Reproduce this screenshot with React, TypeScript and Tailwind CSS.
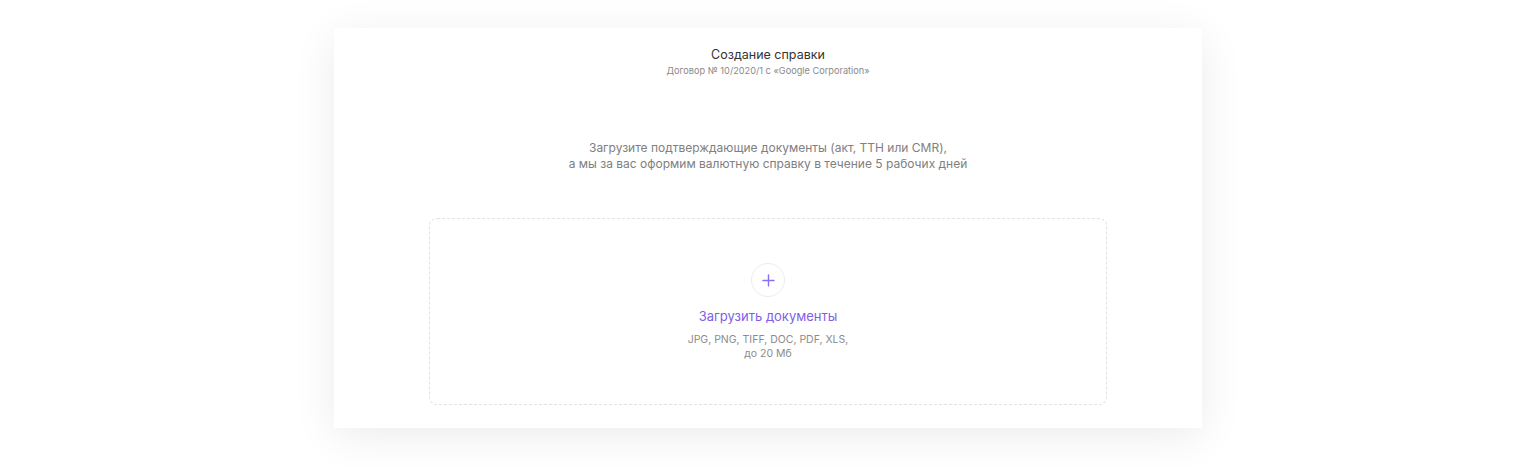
export default function App() {
  return (
    <div
      className="min-h-[468px] w-full bg-white flex justify-center pt-[28px]"
      style={{ fontFamily: 'Inter, "Noto Sans", sans-serif' }}
    >
      <div className="w-[868px] h-[400px] bg-white shadow-[0_8px_40px_rgba(0,0,0,0.08)] flex flex-col items-center">
        <h1 className="mt-[19px] text-[12.5px] leading-[16px] font-normal text-[#333]">
          Создание справки
        </h1>
        <p className="mt-[2px] text-[9.2px] leading-[12px] text-[#8a8a8a]">
          Договор № 10/2020/1 с «Google Corporation»
        </p>

        <p className="mt-[63px] text-[12px] leading-[16px] text-[#808080] text-center">
          Загрузите подтверждающие документы (акт, ТТН или CMR),
          <br />а мы за вас оформим валютную справку в течение 5 рабочих дней
        </p>

        <div className="mt-[46px] w-[678px] h-[187px] rounded-[8px] border border-dashed border-[#e2e2e2] flex flex-col items-center pt-[44px]">
          <button className="w-[34px] h-[34px] rounded-full border border-[#ececec] flex items-center justify-center">
            <svg width="13" height="13" viewBox="0 0 13 13" fill="none">
              <path d="M6.5 1v11M1 6.5h11" stroke="#8a6ff0" strokeWidth="1.4" strokeLinecap="round" />
            </svg>
          </button>
          <span className="mt-[11px] text-[13px] leading-[16px] text-[#7e60e8]">
            Загрузить документы
          </span>
          <p className="mt-[9px] text-[10.5px] leading-[14px] text-[#8c8c8c] text-center">
            JPG, PNG, TIFF, DOC, PDF, XLS,
            <br />
            до 20 Мб
          </p>
        </div>
      </div>
    </div>
  );
}
